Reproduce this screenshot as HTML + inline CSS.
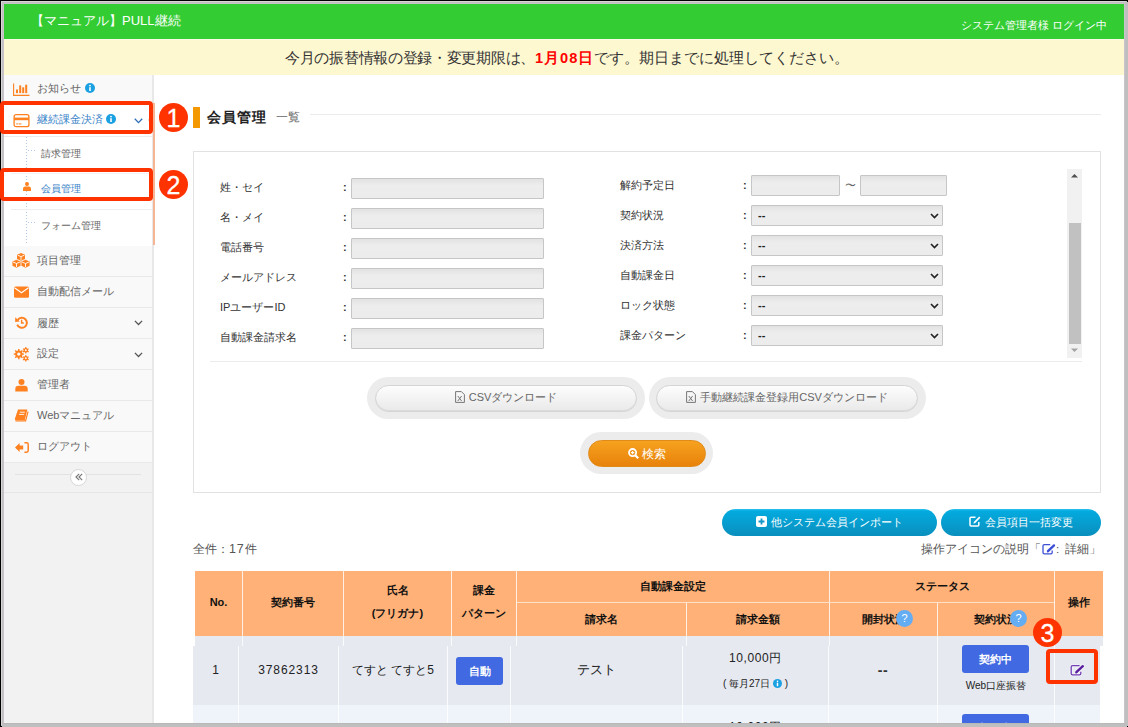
<!DOCTYPE html>
<html><head><meta charset="utf-8">
<style>
*{box-sizing:border-box;margin:0;padding:0}
html,body{width:1128px;height:727px;overflow:hidden}
body{position:relative;background:#bfbfbf;font-family:"Liberation Sans",sans-serif;color:#333}
.a{position:absolute;white-space:nowrap}
#frame{position:absolute;left:0;top:0;width:1128px;height:727px;clip-path:inset(4px 4px 4px 4px);background:#fff}
.hdr{left:0;top:0;width:1128px;height:39px;background:#33cc33}
.notice{left:0;top:39px;width:1128px;height:36px;background:#fef8d1;border-top:1px solid #fbfbe6}
.side{left:0;top:75px;width:154px;height:660px;background:#f2f2f2;border-right:2px solid #e8e8e8}
.item{left:4px;width:148px;background:#f9f9f9;border-bottom:1px solid #e9e9e9}
.itx{font-size:11px;color:#666;line-height:14px}
.ic{position:absolute}
.rbox{border:4px solid #ff3300;border-radius:4px}
.rc{width:29px;height:29px;border-radius:50%;background:#ff3300;color:#fff;font-size:25px;text-align:center;line-height:30px;-webkit-text-stroke:0.3px #fff}
.lbl{font-size:11px;color:#333;line-height:14px}
.inp{height:21px;border:1px solid #c6c6c6;background:linear-gradient(#e2e2e2,#ededed 35%,#ececec);border-radius:1px}
.sel span{position:absolute;left:6px;top:3px;font-size:11px;color:#222;line-height:13px;font-weight:bold}
.ring{border-radius:21px;background:#ececec}
.gbtn{border-radius:14px;background:linear-gradient(#fdfdfd,#e9e9e9);border:1px solid #d4d4d4;box-shadow:inset 0 -1px 0 #dcdcdc;font-size:11px;color:#666;text-align:center;line-height:23px}
.obtn{border-radius:14px;background:linear-gradient(#f6a21f,#e8820b);border:1px solid #e08a1a;font-size:11.5px;color:#fff;text-align:center;line-height:26px}
.bbtn{border-radius:14px;background:linear-gradient(#2cc3ee 0,#03aadf 8%,#0a8fbd 100%);font-size:11.2px;color:#fff;text-align:center;line-height:26px}
.vl{width:1px;background:#fff;opacity:.8}
.th{font-size:11px;font-weight:bold;color:#111;text-align:center;line-height:16px}
.td{font-size:12px;color:#222;text-align:center;line-height:16px}
.qm{width:17px;height:17px;border-radius:50%;background:#64adf3;color:#fff;font-size:11px;text-align:center;line-height:17px}

</style></head><body>
<div class="a" style="left:0;top:0;width:1127px;height:1px;background:#000"></div>
<div class="a" style="left:0;top:0;width:1px;height:726px;background:#000"></div>
<div class="a" style="left:0;top:726px;width:2px;height:1px;background:#000"></div>
<div class="a" style="left:1127px;top:0;width:1px;height:2px;background:#000"></div>
<div class="a" style="left:1127px;top:726px;width:1px;height:1px;background:#000"></div>
<div class="a" style="left:1px;top:1px;width:1125px;height:1px;background:#d6d6d6"></div>
<div class="a" style="left:1px;top:1px;width:1px;height:724px;background:#d6d6d6"></div>
<div class="a" style="left:3px;top:3px;width:1122px;height:1px;background:#cbc2cc"></div>
<div class="a" style="left:3px;top:3px;width:1px;height:720px;background:#cbc2cc"></div>
<div class="a" style="left:1124px;top:3px;width:1px;height:720px;background:#cbc2cc"></div>
<div class="a" style="left:3px;top:723px;width:1122px;height:1px;background:#b8b8b8"></div>
<div id="frame">
  <div class="a hdr"></div>
  <div class="a" style="left:31px;top:13px;font-size:13px;color:#fff;line-height:16px">【マニュアル】PULL継続</div>
  <div class="a" style="left:961px;top:18px;font-size:11.2px;color:#fff;line-height:15px">システム管理者様 ログイン中</div>
  <div class="a notice"></div>
  <div class="a" style="left:285px;top:50px;font-size:14.6px;color:#333;line-height:17px"><span style="letter-spacing:-0.3px">今月の振替情報の登録・変更期限は、</span><b style="color:#f00;letter-spacing:1px">1月08日</b>です。期日までに処理してください。</div>

  <!-- sidebar -->
  <div class="a side"></div>
  <div class="a item" style="top:75px;height:28px;border-bottom:none"></div>
  <div class="a item" style="top:103px;height:34px;background:#fff;border-bottom:1px solid #ececec"></div>
  <div class="a" style="left:4px;top:137px;width:148px;height:109px;background:#fff"></div>
  <div class="a" style="left:153px;top:103px;width:2px;height:142px;background:#f6b595"></div>
  <svg class="ic" style="left:147px;top:115px" width="6" height="10" viewBox="0 0 6 10"><path d="M6 0 L1 5 L6 10 Z" fill="#f7b08a"/></svg>
  <div class="a" style="left:26px;top:137px;width:1px;height:107px;background:repeating-linear-gradient(#b3c9e8 0 1px,transparent 1px 3px)"></div>
  <div class="a" style="left:28px;top:150px;width:8px;height:1px;background:repeating-linear-gradient(90deg,#b3c9e8 0 1px,transparent 1px 3px)"></div>
  <div class="a" style="left:28px;top:222px;width:8px;height:1px;background:repeating-linear-gradient(90deg,#b3c9e8 0 1px,transparent 1px 3px)"></div>
  <div class="a" style="left:11px;top:209px;width:141px;height:1px;background:#eeeeee"></div>
  <div class="a" style="left:11px;top:173px;width:141px;height:1px;background:#f2f2f2"></div>
    <div class="a item" style="top:246px;height:31px"></div>
  <div class="a item" style="top:277px;height:31px"></div>
  <div class="a item" style="top:308px;height:31px"></div>
  <div class="a item" style="top:339px;height:31px"></div>
  <div class="a item" style="top:370px;height:31px"></div>
  <div class="a item" style="top:401px;height:31px"></div>
  <div class="a item" style="top:432px;height:31px"></div>
  <div class="a" style="left:4px;top:463px;width:148px;height:30px;border-bottom:1px solid #e6e6e6"></div>
  <div class="a" style="left:15px;top:474px;width:126px;height:1px;background:#e2e2e2"></div>
  <div class="a" style="left:70px;top:469px;width:17px;height:17px;border-radius:50%;background:#fff;border:1px solid #d6d6d6"></div>
  <svg class="ic" style="left:74px;top:472px" width="10" height="10" viewBox="0 0 10 10"><path d="M5.2 1.8 L2 5 L5.2 8.2 M8.2 1.8 L5 5 L8.2 8.2" fill="none" stroke="#7a7a7a" stroke-width="1.2"/></svg>

  <div class="a itx" style="left:37px;top:81px">お知らせ</div>
  <div class="a itx" style="left:37px;top:112px;color:#3a84c9">継続課金決済</div>
  <div class="a itx" style="left:41px;top:147px;font-size:10px">請求管理</div>
  <div class="a itx" style="left:41px;top:182px;color:#3a84c9;font-size:10px">会員管理</div>
  <div class="a itx" style="left:41px;top:219px;font-size:10px">フォーム管理</div>
  <div class="a itx" style="left:37px;top:253px">項目管理</div>
  <div class="a itx" style="left:37px;top:284px">自動配信メール</div>
  <div class="a itx" style="left:37px;top:316px">履歴</div>
  <div class="a itx" style="left:37px;top:346px">設定</div>
  <div class="a itx" style="left:37px;top:377px">管理者</div>
  <div class="a itx" style="left:37px;top:408px">Webマニュアル</div>
  <div class="a itx" style="left:37px;top:439px">ログアウト</div>

  <!-- info icons -->
  <svg class="ic" style="left:85px;top:83px" width="10" height="10" viewBox="0 0 10 10"><circle cx="5" cy="5" r="5" fill="#1ba1e2"/><rect x="4.2" y="4.2" width="1.6" height="3.8" fill="#fff"/><circle cx="5" cy="2.6" r="0.9" fill="#fff"/></svg>
  <svg class="ic" style="left:106px;top:114px" width="10" height="10" viewBox="0 0 10 10"><circle cx="5" cy="5" r="5" fill="#1ba1e2"/><rect x="4.2" y="4.2" width="1.6" height="3.8" fill="#fff"/><circle cx="5" cy="2.6" r="0.9" fill="#fff"/></svg>
  <!-- chevrons -->
  <svg class="ic" style="left:134px;top:118px" width="9" height="6" viewBox="0 0 9 6"><path d="M0.8 0.8 L4.5 4.6 L8.2 0.8" fill="none" stroke="#2d6cb5" stroke-width="1.3"/></svg>
  <svg class="ic" style="left:134px;top:320px" width="9" height="6" viewBox="0 0 9 6"><path d="M0.9 0.9 L4.5 4.5 L8.1 0.9" fill="none" stroke="#555" stroke-width="1.3"/></svg>
  <svg class="ic" style="left:134px;top:352px" width="9" height="6" viewBox="0 0 9 6"><path d="M0.9 0.9 L4.5 4.5 L8.1 0.9" fill="none" stroke="#555" stroke-width="1.3"/></svg>

  <!-- chart icon -->
  <svg class="ic" style="left:13px;top:83px" width="17" height="13" viewBox="0 0 17 13"><path d="M0.6 0.5 V12.4 H16.5" fill="none" stroke="#ff8120" stroke-width="1.1"/><rect x="3" y="6.5" width="2" height="3.6" fill="#ff8120"/><rect x="6.2" y="2.4" width="2" height="7.7" fill="#ff8120"/><rect x="9.2" y="4.3" width="2" height="5.8" fill="#ff8120"/><rect x="12.2" y="1.7" width="2" height="8.4" fill="#ff8120"/></svg>
  <!-- card icon -->
  <svg class="ic" style="left:13px;top:114px" width="17" height="14" viewBox="0 0 17 14"><rect x="1.1" y="0.7" width="14.8" height="12" rx="2" fill="none" stroke="#ff8120" stroke-width="1.3"/><rect x="1" y="3.6" width="15" height="2.6" fill="#ff8120"/><rect x="3.2" y="9.4" width="2.2" height="1" fill="#ff8120"/><rect x="6" y="9.4" width="2.4" height="1" fill="#ff8120"/></svg>
  <!-- user small (submenu) -->
  <svg class="ic" style="left:23px;top:182px" width="8" height="9" viewBox="0 0 8 9"><circle cx="4" cy="2" r="2" fill="#ff8120"/><path d="M0 9 V7 Q0 4.6 2.2 4.6 H5.8 Q8 4.6 8 7 V9 Z" fill="#ff8120"/></svg>
  <!-- cubes -->
  <svg class="ic" style="left:12px;top:253px" width="18" height="15" viewBox="0 0 18 15"><g fill="#ff8120"><path d="M9 0 L13 1.8 V6 L9 7.8 L5 6 V1.8 Z"/><path d="M4.5 6.8 L8.6 8.6 V12.8 L4.5 14.8 L0.4 12.8 V8.6 Z"/><path d="M13.5 6.8 L17.6 8.6 V12.8 L13.5 14.8 L9.4 12.8 V8.6 Z"/></g><g stroke="#fff" stroke-width="0.9" fill="none"><path d="M5.6 2.2 L9 3.6 L12.4 2.2"/><path d="M9 3.6 V7"/><path d="M1 9 L4.5 10.5 L8 9"/><path d="M4.5 10.5 V14"/><path d="M10 9 L13.5 10.5 L17 9"/><path d="M13.5 10.5 V14"/></g></svg>
  <!-- envelope -->
  <svg class="ic" style="left:14px;top:286px" width="15" height="12" viewBox="0 0 15 12"><rect x="0" y="0.5" width="15" height="11.2" rx="1.5" fill="#ff8120"/><path d="M0.5 1.8 L7.5 6.8 L14.5 1.8" fill="none" stroke="#fff" stroke-width="1.1"/></svg>
  <!-- history -->
  <svg class="ic" style="left:15px;top:316px" width="13" height="13" viewBox="0 0 13 13"><path d="M2.6 4.2 A5 5 0 1 1 2.2 8.6" fill="none" stroke="#ff8120" stroke-width="2"/><path d="M0.2 1.2 L4.8 5.6 L0.2 6 Z" fill="#ff8120"/><path d="M6.6 3.8 V7 H8.8" fill="none" stroke="#ff8120" stroke-width="1.4"/></svg>
  <!-- cogs -->
  <svg class="ic" style="left:13px;top:347px" width="17" height="15" viewBox="0 0 17 15"><path fill-rule="evenodd" fill="#ff8120" d="M9.22 5.68 L9.42 6.35 L10.85 6.38 L10.85 7.82 L9.42 7.85 L9.22 8.52 L8.89 9.13 L9.88 10.16 L8.86 11.18 L7.83 10.19 L7.22 10.52 L6.55 10.72 L6.52 12.15 L5.08 12.15 L5.05 10.72 L4.38 10.52 L3.77 10.19 L2.74 11.18 L1.72 10.16 L2.71 9.13 L2.38 8.52 L2.18 7.85 L0.75 7.82 L0.75 6.38 L2.18 6.35 L2.38 5.68 L2.71 5.07 L1.72 4.04 L2.74 3.02 L3.77 4.01 L4.38 3.68 L5.05 3.48 L5.08 2.05 L6.52 2.05 L6.55 3.48 L7.22 3.68 L7.83 4.01 L8.86 3.02 L9.88 4.04 L8.89 5.07 Z M7.50 7.10 A1.7 1.7 0 1 0 4.10 7.10 A1.7 1.7 0 1 0 7.50 7.10 Z M15.10 3.30 L15.03 3.87 L15.92 4.39 L15.30 5.46 L14.41 4.94 L13.95 5.29 L13.42 5.52 L13.42 6.54 L12.18 6.54 L12.18 5.52 L11.65 5.29 L11.19 4.94 L10.30 5.46 L9.68 4.39 L10.57 3.87 L10.50 3.30 L10.57 2.73 L9.68 2.21 L10.30 1.14 L11.19 1.66 L11.65 1.31 L12.18 1.08 L12.18 0.06 L13.42 0.06 L13.42 1.08 L13.95 1.31 L14.41 1.66 L15.30 1.14 L15.92 2.21 L15.03 2.73 Z M13.75 3.30 A0.95 0.95 0 1 0 11.85 3.30 A0.95 0.95 0 1 0 13.75 3.30 Z M15.10 11.30 L15.03 11.87 L15.92 12.39 L15.30 13.46 L14.41 12.94 L13.95 13.29 L13.42 13.52 L13.42 14.54 L12.18 14.54 L12.18 13.52 L11.65 13.29 L11.19 12.94 L10.30 13.46 L9.68 12.39 L10.57 11.87 L10.50 11.30 L10.57 10.73 L9.68 10.21 L10.30 9.14 L11.19 9.66 L11.65 9.31 L12.18 9.08 L12.18 8.06 L13.42 8.06 L13.42 9.08 L13.95 9.31 L14.41 9.66 L15.30 9.14 L15.92 10.21 L15.03 10.73 Z M13.75 11.30 A0.95 0.95 0 1 0 11.85 11.30 A0.95 0.95 0 1 0 13.75 11.30 Z"/></svg>
  <!-- user -->
  <svg class="ic" style="left:15px;top:379px" width="13" height="13" viewBox="0 0 13 13"><circle cx="6.5" cy="3" r="3" fill="#ff8120"/><path d="M0.3 12.4 V10 Q0.3 6.8 3.4 6.8 H9.6 Q12.7 6.8 12.7 10 V12.4 Z" fill="#ff8120"/></svg>
  <!-- book -->
  <svg class="ic" style="left:14px;top:409px" width="15" height="14" viewBox="0 0 15 14"><path d="M4 0.6 H13.4 L10.8 11 H1.6 Q0.6 11 0.9 9.8 Z" fill="#ff8120"/><path d="M1.4 11.8 H11.6 L14 2.6" fill="none" stroke="#ff8120" stroke-width="1.2"/><path d="M5.8 3.2 H10.8 M5.2 5.4 H10.2" stroke="#fff" stroke-width="0.9"/></svg>
  <!-- sign in -->
  <svg class="ic" style="left:15px;top:442px" width="14" height="11" viewBox="0 0 14 11"><path d="M0 5.5 L4.6 1 V3.6 H8.2 V7.4 H4.6 V10 Z" fill="#ff8120"/><path d="M9.4 0.8 H11.6 Q13.2 0.8 13.2 2.4 V8.6 Q13.2 10.2 11.6 10.2 H9.4" fill="none" stroke="#ff8120" stroke-width="1.5"/></svg>

  <!-- title -->
  <div class="a" style="left:193px;top:107px;width:7px;height:21px;background:#f39800"></div>
  <div class="a" style="left:207px;top:109px;font-size:14px;font-weight:bold;color:#222;letter-spacing:1px;line-height:16px">会員管理</div>
  <div class="a" style="left:276px;top:110px;font-size:12px;color:#666;line-height:14px">一覧</div>
  <div class="a" style="left:310px;top:114px;width:791px;height:1px;background:#ececec"></div>

  <!-- search panel -->
  <div class="a" style="left:193px;top:151px;width:908px;height:342px;border:1px solid #e2e2e2"></div>
  <div class="a" style="left:210px;top:361px;width:872px;height:1px;background:#ececec"></div>
  <div class="a" style="left:1067px;top:169px;width:15px;height:189px;background:#f1f1f1"></div>
  <div class="a" style="left:1069px;top:223px;width:12px;height:121px;background:#c1c1c1"></div>
  <svg class="ic" style="left:1070px;top:173px" width="9" height="6" viewBox="0 0 9 6"><path d="M1 4.5 L4.5 1 L8 4.5 Z" fill="#505050"/></svg>
  <svg class="ic" style="left:1070px;top:347px" width="9" height="6" viewBox="0 0 9 6"><path d="M1 1.5 L4.5 5 L8 1.5 Z" fill="#a3a3a3"/></svg>
  <div class="a lbl" style="left:220px;top:180px">姓・セイ</div>
  <div class="a lbl" style="left:343px;top:180px;font-weight:bold">:</div>
  <div class="a inp" style="left:351px;top:178px;width:193px"></div>
  <div class="a lbl" style="left:620px;top:178px">解約予定日</div>
  <div class="a lbl" style="left:743px;top:178px;font-weight:bold">:</div>
  <div class="a inp" style="left:751px;top:175px;width:89px;height:21px"></div>
  <div class="a lbl" style="left:845px;top:178px;font-size:11px;color:#666">〜</div>
  <div class="a inp" style="left:860px;top:175px;width:87px;height:21px"></div>
  <div class="a lbl" style="left:220px;top:210px">名・メイ</div>
  <div class="a lbl" style="left:343px;top:210px;font-weight:bold">:</div>
  <div class="a inp" style="left:351px;top:208px;width:193px"></div>
  <div class="a lbl" style="left:620px;top:208px">契約状況</div>
  <div class="a lbl" style="left:743px;top:208px;font-weight:bold">:</div>
  <div class="a inp sel" style="left:751px;top:205px;width:192px;height:21px"><span>--</span><svg style="position:absolute;left:178px;top:7px" width="9" height="6" viewBox="0 0 9 6"><path d="M1 1 L4.5 4.6 L8 1" fill="none" stroke="#222" stroke-width="1.6"/></svg></div>
  <div class="a lbl" style="left:220px;top:240px">電話番号</div>
  <div class="a lbl" style="left:343px;top:240px;font-weight:bold">:</div>
  <div class="a inp" style="left:351px;top:238px;width:193px"></div>
  <div class="a lbl" style="left:620px;top:238px">決済方法</div>
  <div class="a lbl" style="left:743px;top:238px;font-weight:bold">:</div>
  <div class="a inp sel" style="left:751px;top:235px;width:192px;height:21px"><span>--</span><svg style="position:absolute;left:178px;top:7px" width="9" height="6" viewBox="0 0 9 6"><path d="M1 1 L4.5 4.6 L8 1" fill="none" stroke="#222" stroke-width="1.6"/></svg></div>
  <div class="a lbl" style="left:220px;top:270px">メールアドレス</div>
  <div class="a lbl" style="left:343px;top:270px;font-weight:bold">:</div>
  <div class="a inp" style="left:351px;top:268px;width:193px"></div>
  <div class="a lbl" style="left:620px;top:268px">自動課金日</div>
  <div class="a lbl" style="left:743px;top:268px;font-weight:bold">:</div>
  <div class="a inp sel" style="left:751px;top:265px;width:192px;height:21px"><span>--</span><svg style="position:absolute;left:178px;top:7px" width="9" height="6" viewBox="0 0 9 6"><path d="M1 1 L4.5 4.6 L8 1" fill="none" stroke="#222" stroke-width="1.6"/></svg></div>
  <div class="a lbl" style="left:220px;top:300px">IPユーザーID</div>
  <div class="a lbl" style="left:343px;top:300px;font-weight:bold">:</div>
  <div class="a inp" style="left:351px;top:298px;width:193px"></div>
  <div class="a lbl" style="left:620px;top:298px">ロック状態</div>
  <div class="a lbl" style="left:743px;top:298px;font-weight:bold">:</div>
  <div class="a inp sel" style="left:751px;top:295px;width:192px;height:21px"><span>--</span><svg style="position:absolute;left:178px;top:7px" width="9" height="6" viewBox="0 0 9 6"><path d="M1 1 L4.5 4.6 L8 1" fill="none" stroke="#222" stroke-width="1.6"/></svg></div>
  <div class="a lbl" style="left:220px;top:330px">自動課金請求名</div>
  <div class="a lbl" style="left:343px;top:330px;font-weight:bold">:</div>
  <div class="a inp" style="left:351px;top:328px;width:193px"></div>
  <div class="a lbl" style="left:620px;top:328px">課金パターン</div>
  <div class="a lbl" style="left:743px;top:328px;font-weight:bold">:</div>
  <div class="a inp sel" style="left:751px;top:325px;width:192px;height:21px"><span>--</span><svg style="position:absolute;left:178px;top:7px" width="9" height="6" viewBox="0 0 9 6"><path d="M1 1 L4.5 4.6 L8 1" fill="none" stroke="#222" stroke-width="1.6"/></svg></div>

  <!-- buttons -->
  <div class="a ring" style="left:367px;top:377px;width:278px;height:42px"></div>
  <div class="a gbtn" style="left:375px;top:385px;width:262px;height:27px"><svg width="10" height="12" viewBox="0 0 10 12" style="vertical-align:-2px;margin-right:4px"><path d="M0.6 0.6 H6.4 L9.4 3.6 V11.4 H0.6 Z" fill="none" stroke="#777" stroke-width="1"/><path d="M2.8 5 L6.6 10 M6.6 5 L2.8 10" stroke="#777" stroke-width="1"/></svg>CSVダウンロード</div>
  <div class="a ring" style="left:649px;top:377px;width:277px;height:42px"></div>
  <div class="a gbtn" style="left:656px;top:385px;width:262px;height:27px"><svg width="10" height="12" viewBox="0 0 10 12" style="vertical-align:-2px;margin-right:4px"><path d="M0.6 0.6 H6.4 L9.4 3.6 V11.4 H0.6 Z" fill="none" stroke="#777" stroke-width="1"/><path d="M2.8 5 L6.6 10 M6.6 5 L2.8 10" stroke="#777" stroke-width="1"/></svg>手動継続課金登録用CSVダウンロード</div>
  <div class="a ring" style="left:580px;top:432px;width:133px;height:42px"></div>
  <div class="a obtn" style="left:588px;top:440px;width:118px;height:27px"><svg width="11" height="11" viewBox="0 0 11 11" style="vertical-align:-1px;margin-right:3px"><circle cx="4.6" cy="4.6" r="3.6" fill="none" stroke="#fff" stroke-width="1.8"/><path d="M7.2 7.2 L10.2 10.2" stroke="#fff" stroke-width="2.2"/><path d="M2.9 4.6 H6.3 M4.6 2.9 V6.3" stroke="#fff" stroke-width="1.1"/></svg>検索</div>

  <div class="a bbtn" style="left:722px;top:509px;width:215px;height:27px"><svg width="11" height="11" viewBox="0 0 11 11" style="vertical-align:-1px;margin-right:4px"><rect x="0" y="0" width="11" height="11" rx="2" fill="#fff"/><path d="M2.5 5.5 H8.5 M5.5 2.5 V8.5" stroke="#1596c6" stroke-width="1.8"/></svg>他システム会員インポート</div>
  <div class="a bbtn" style="left:941px;top:509px;width:160px;height:27px"><svg width="12" height="11" viewBox="0 0 12 11" style="vertical-align:-1px;margin-right:4px"><path d="M6.5 1.2 H2 Q1 1.2 1 2.2 V9 Q1 10 2 10 H8.8 Q9.8 10 9.8 9 V6" fill="none" stroke="#fff" stroke-width="1.5"/><path d="M10.2 0.6 L11.4 1.8 L6 7.2 L4.4 7.6 L4.8 6 Z" fill="#fff"/></svg>会員項目一括変更</div>

  <div class="a lbl" style="left:193px;top:542px;font-size:11.5px;color:#555">全件：<span style="letter-spacing:0.8px;font-size:12.5px">17</span>件</div>
  <div class="a lbl" style="left:921px;top:542px;font-size:11.5px;color:#555">操作アイコンの説明「<svg width="14" height="12" viewBox="0 0 14 12" style="vertical-align:-2px;margin-left:1px"><path d="M8.2 1.6 H2.4 Q1 1.6 1 3 V9.4 Q1 10.8 2.4 10.8 H8.8 Q10.2 10.8 10.2 9.4 V7.4" fill="none" stroke="#3d50d6" stroke-width="1.3"/><path d="M6 8.2 L12 2.4" stroke="#3d50d6" stroke-width="2.4" stroke-linecap="round"/><path d="M5 9.6 L5.8 7.4 L7.2 8.8 Z" fill="#3d50d6"/></svg><span style="margin-right:3px">:</span>&nbsp;詳細」</div>

  <!-- table header -->
  <div class="a" style="left:195px;top:571px;width:908px;height:65px;background:#ffb178"></div>
  <div class="a" style="left:195px;top:636px;width:908px;height:10px;background:#e6e9f0"></div>
  <div class="a vl" style="left:242px;top:571px;height:75px"></div>
  <div class="a vl" style="left:343px;top:571px;height:75px"></div>
  <div class="a vl" style="left:451px;top:571px;height:75px"></div>
  <div class="a vl" style="left:516px;top:571px;height:75px"></div>
  <div class="a vl" style="left:829px;top:571px;height:75px"></div>
  <div class="a vl" style="left:1054px;top:571px;height:75px"></div>
  <div class="a vl" style="left:686px;top:602px;height:44px"></div>
  <div class="a vl" style="left:937px;top:602px;height:44px"></div>
  <div class="a" style="left:517px;top:602px;width:537px;height:1px;background:#ffe0c8"></div>
  <div class="a th" style="left:195px;width:47px;top:594px">No.</div>
  <div class="a th" style="left:243px;width:100px;top:594px">契約番号</div>
  <div class="a th" style="left:344px;width:107px;top:582px">氏名</div>
  <div class="a th" style="left:344px;width:107px;top:605px">(フリガナ)</div>
  <div class="a th" style="left:452px;width:64px;top:582px">課金</div>
  <div class="a th" style="left:452px;width:64px;top:605px">パターン</div>
  <div class="a th" style="left:517px;width:312px;top:578px">自動課金設定</div>
  <div class="a th" style="left:517px;width:169px;top:611px">請求名</div>
  <div class="a th" style="left:687px;width:142px;top:611px">請求金額</div>
  <div class="a th" style="left:830px;width:224px;top:578px">ステータス</div>
  <div class="a th" style="left:830px;width:107px;top:611px">開封状況</div>
  <div class="a th" style="left:938px;width:116px;top:611px">契約状況</div>
  <div class="a th" style="left:1055px;width:48px;top:594px">操作</div>
  <div class="a qm" style="left:896px;top:610px">?</div>
  <div class="a qm" style="left:1010px;top:610px">?</div>

  <!-- rows -->
  <div class="a" style="left:193px;top:646px;width:907px;height:59px;background:#e6e9f0"></div>
  <div class="a" style="left:193px;top:705px;width:907px;height:30px;background:#eff4fb"></div>
  <div class="a vl" style="left:238px;top:646px;height:90px"></div>
  <div class="a vl" style="left:338px;top:646px;height:90px"></div>
  <div class="a vl" style="left:447px;top:646px;height:90px"></div>
  <div class="a vl" style="left:510px;top:646px;height:90px"></div>
  <div class="a vl" style="left:682px;top:646px;height:90px"></div>
  <div class="a vl" style="left:828px;top:646px;height:90px"></div>
  <div class="a vl" style="left:937px;top:646px;height:90px"></div>
  <div class="a vl" style="left:1054px;top:646px;height:90px"></div>
  <div class="a td" style="left:193px;width:45px;top:662px">1</div>
  <div class="a td" style="left:239px;width:99px;top:662px;letter-spacing:0.9px">37862313</div>
  <div class="a td" style="left:339px;width:108px;top:662px">てすと てすと5</div>
  <div class="a" style="left:456px;top:657px;width:47px;height:28px;background:#4169e1;border-radius:3px;color:#fff;font-weight:bold;font-size:11px;text-align:center;line-height:28px">自動</div>
  <div class="a td" style="left:511px;width:171px;top:662px;font-size:13px">テスト</div>
  <div class="a td" style="left:683px;width:145px;top:650px;letter-spacing:0.6px">10,000円</div>
  <div class="a td" style="left:683px;width:145px;top:676px;font-size:10px">( 毎月27日 <svg width="9" height="9" viewBox="0 0 10 10" style="vertical-align:-1px"><circle cx="5" cy="5" r="5" fill="#1ba1e2"/><rect x="4.2" y="4.2" width="1.6" height="3.8" fill="#fff"/><circle cx="5" cy="2.6" r="0.9" fill="#fff"/></svg> )</div>
  <div class="a td" style="left:829px;width:108px;top:662px;font-size:14px;letter-spacing:0.5px;font-weight:bold;color:#333">--</div>
  <div class="a" style="left:962px;top:645px;width:67px;height:28px;background:#4169e1;border-radius:3px;color:#fff;font-weight:bold;font-size:11px;text-align:center;line-height:28px">契約中</div>
  <div class="a td" style="left:938px;width:116px;top:678px;font-size:10px">Web口座振替</div>
  <svg class="ic" style="left:1070px;top:664px;filter:drop-shadow(0 0 1px #fff)" width="15" height="12" viewBox="0 0 15 12"><path d="M9.6 1.6 H2.6 Q1.2 1.6 1.2 3 V9.4 Q1.2 10.8 2.6 10.8 H9.4 Q10.8 10.8 10.8 9.4 V7.8" fill="none" stroke="#7540b8" stroke-width="1.3"/><path d="M6.4 8.2 L12.8 2.2" stroke="#5a1f9e" stroke-width="2.4" stroke-linecap="round"/><path d="M5.4 9.6 L6.2 7.4 L7.6 8.8 Z" fill="#5a1f9e"/></svg>
  <div class="a td" style="left:683px;width:145px;top:719px;letter-spacing:0.6px">10,000円</div>
  <div class="a" style="left:962px;top:714px;width:67px;height:28px;background:#4169e1;border-radius:3px;color:#fff;font-weight:bold;font-size:11px;text-align:center;line-height:28px">契約中</div>
</div>

<!-- annotations -->
<div class="a rbox" style="left:0;top:101px;width:153px;height:33px;border-radius:4px 4px 4px 4px"></div>
<div class="a rbox" style="left:0;top:168px;width:153px;height:33px"></div>
<div class="a rbox" style="left:1046px;top:649px;width:52px;height:35px"></div>
<div class="a rc" style="left:159px;top:103px">1</div>
<div class="a rc" style="left:159px;top:170px">2</div>
<div class="a rc" style="left:1033px;top:618px">3</div>
</body></html>
